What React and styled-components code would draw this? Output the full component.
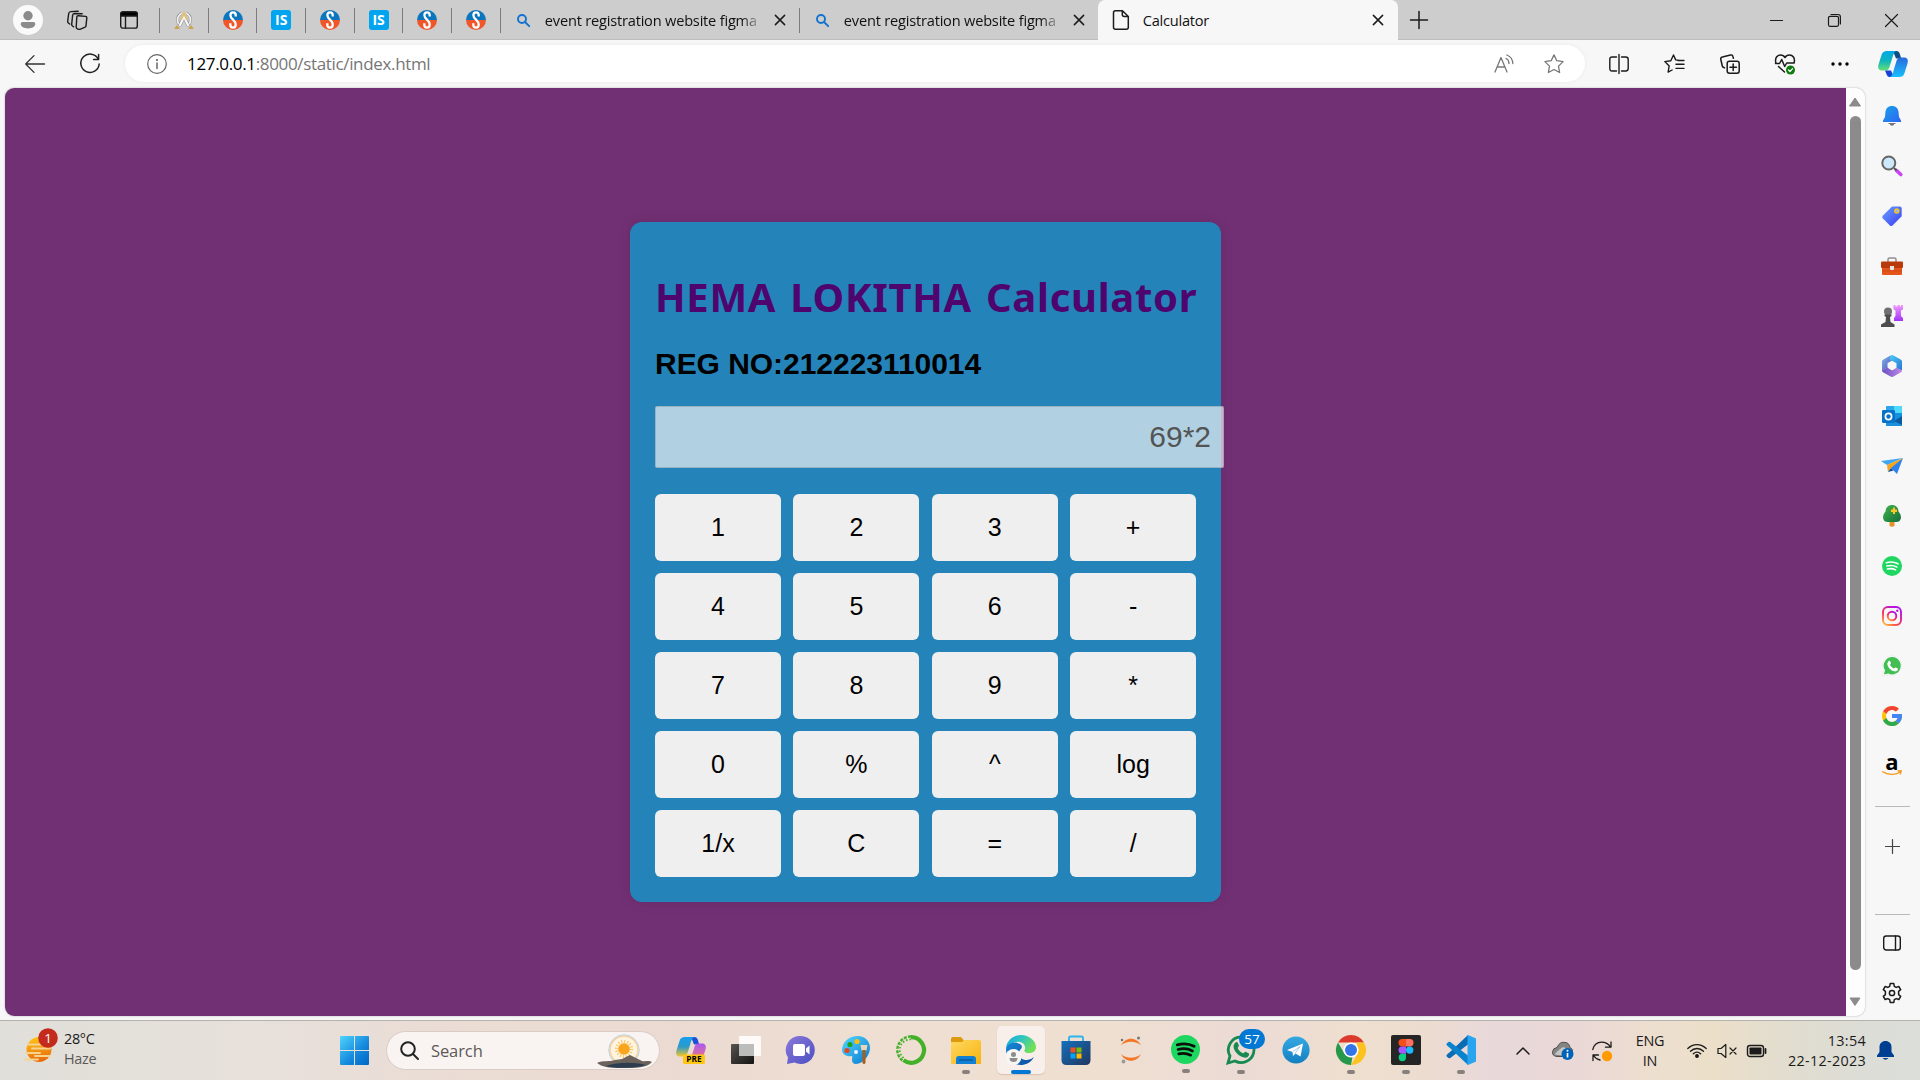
import React from "react";
import styled, { createGlobalStyle } from "styled-components";

const Global = createGlobalStyle`
  html, body { margin: 0; padding: 0; }
  body { width: 1920px; height: 1080px; overflow: hidden; background: #f7f7f7; }
  * { box-sizing: border-box; }
  svg { display: block; flex: none; overflow: visible; }
`;

const UI = `"Open Sans", "Noto Sans", sans-serif`;
const ARIAL = `"Liberation Sans", Arial, sans-serif`;

const Screen = styled.div`
  width: 1920px;
  height: 1080px;
  display: flex;
  flex-direction: column;
  font-family: ${UI};
  color: #1b1b1b;
`;

/* ---------- tab strip ---------- */
const TabStrip = styled.div`
  height: 40px;
  flex: none;
  display: flex;
  align-items: center;
  background: #cdcdcd;
  box-shadow: inset 0 -1px 0 #bdbdbd;
`;
const Slot = styled.div`
  width: ${(p) => p.$w}px;
  height: ${(p) => (p.$h ? p.$h + "px" : "100%")};
  flex: none;
  display: flex;
  align-items: center;
  justify-content: center;
`;
const Divider = styled.div`
  width: 1px;
  height: 25px;
  flex: none;
  background: #7c7c7c;
`;
const Tab = styled.div`
  width: ${(p) => p.$w}px;
  height: 40px;
  flex: none;
  display: flex;
  align-items: center;
  padding: 0 ${(p) => p.$pr}px 0 ${(p) => p.$pl}px;
  background: ${(p) => (p.$active ? "#f7f7f7" : "transparent")};
  border-radius: 7px 7px 0 0;
`;
const TabTitle = styled.div`
  flex: none;
  width: ${(p) => p.$w}px;
  margin-left: ${(p) => p.$ml}px;
  margin-right: auto;
  padding-bottom: 1px;
  overflow: hidden;
  white-space: nowrap;
  font-size: 14.6px;
  line-height: 24px;
  letter-spacing: ${(p) => p.$ls}px;
  color: #111;
  ${(p) => p.$fade && "-webkit-mask-image: linear-gradient(90deg, #000 92%, transparent 102%);"}
`;
const Favicon = styled.div`
  width: 20px;
  height: 20px;
  border-radius: 3px;
  background: #00a4ef;
  color: #fff;
  font: 700 14px/20px ${UI};
  text-align: center;
`;
const Spacer = styled.div`
  flex: 1;
`;

/* ---------- toolbar ---------- */
const Toolbar = styled.div`
  height: 48px;
  flex: none;
  display: flex;
  align-items: center;
  background: #f7f7f7;
  padding-bottom: 1px;
`;
const AddressBar = styled.div`
  width: 1460px;
  height: 37px;
  flex: none;
  display: flex;
  align-items: center;
  border-radius: 19px;
  background: #fff;
  box-shadow: 0 0 4px rgba(0, 0, 0, 0.06);
`;
const Url = styled.div`
  flex: 1;
  font-size: 17px;
  line-height: 24px;
  letter-spacing: -0.34px;
  color: #767676;
  white-space: nowrap;
  span { color: #000; }
`;

/* ---------- page ---------- */
const Middle = styled.div`
  height: 932px;
  flex: none;
  display: flex;
  background: #f7f7f7;
  padding: 0 0 4px 5px;
`;
const Viewport = styled.div`
  width: 1860px;
  height: 928px;
  flex: none;
  display: flex;
  border-radius: 9px;
  overflow: hidden;
  background: #fdfdfd;
  box-shadow: 0 0 2px rgba(0, 0, 0, 0.3);
`;
const Page = styled.main`
  width: 1841px;
  padding-top: 134px;
  background: #723074;
  font-family: ${ARIAL};
`;
const Scrollbar = styled.div`
  width: 19px;
  display: flex;
  flex-direction: column;
  align-items: center;
  padding: 9px 1px 0 0;
`;
const Thumb = styled.div`
  width: 11px;
  height: 854px;
  flex: none;
  margin: 9px 0 27px;
  border-radius: 6px;
  background: #8b8b8b;
`;
const Card = styled.section`
  width: 591px;
  height: 680px;
  margin-left: 625px;
  padding: 51px 25px 25px;
  border-radius: 12px;
  background: #2483b9;
  box-shadow: 0 0 13px rgba(0, 0, 0, 0.12);
`;
const Title = styled.h1`
  margin: 0;
  height: 48px;
  font: 700 40px/48px "Noto Sans", sans-serif;
  letter-spacing: 0.7px;
  word-spacing: 3px;
  white-space: nowrap;
  color: #4e056e;
`;
const RegNo = styled.h2`
  margin: 25px 0 0;
  height: 35px;
  font: 700 30px/35px ${ARIAL};
  letter-spacing: -0.04px;
  white-space: nowrap;
  color: #000;
`;
const Display = styled.div`
  width: 569px;
  height: 62px;
  margin: 25px 0 26px;
  padding-right: 12px;
  border: 1px solid rgba(110, 120, 125, 0.35);
  border-radius: 2px;
  background: rgba(248, 248, 248, 0.67);
  font: 30px/60px ${ARIAL};
  text-align: right;
  color: #545454;
`;
const Keys = styled.div`
  display: grid;
  grid-template-columns: repeat(4, 126px);
  grid-auto-rows: 67px;
  gap: 12px 12.4px;
`;
const Key = styled.button`
  border: 0;
  padding: 0;
  border-radius: 6px;
  background: #efefef;
  font: 25px/67px ${ARIAL};
  color: #000;
`;

/* ---------- sidebar ---------- */
const Sidebar = styled.aside`
  width: 54px;
  display: flex;
  flex-direction: column;
  align-items: center;
  padding-top: 3px;
`;
const Rule = styled.div`
  width: 35px;
  height: 1px;
  flex: none;
  background: #b9b9b9;
`;

/* ---------- taskbar ---------- */
const Taskbar = styled.footer`
  height: 60px;
  flex: none;
  display: flex;
  align-items: center;
  border-top: 1px solid #b5b2ae;
  background: linear-gradient(90deg, #e0dfd9 0, #e7e0db 250px, #ebdcd4 480px, #ebdad1 680px, #efdfd2 900px,
    #efdfd1 1110px, #ecdbd5 1240px, #eedfcf 1360px, #ecdcd0 1430px, #e9d8da 1490px, #ead8d6 1580px,
    #eddfce 1660px, #ecdfc9 1710px, #e2ddce 1780px, #dcddd6 1860px, #dcdeda 1920px);
`;
const Weather = styled.div`
  width: 327px;
  height: 100%;
  display: flex;
  padding: 8px 0 0 25px;
`;
const TwoLines = styled.div`
  width: ${(p) => p.$w}px;
  margin-left: ${(p) => p.$ml || 0}px;
  flex: none;
  text-align: ${(p) => p.$align || "left"};
  font-size: 14.4px;
  line-height: 20px;
  letter-spacing: ${(p) => p.$ls ?? -0.3}px;
  white-space: nowrap;
  span { color: #5b5957; }
`;
const SearchBox = styled.div`
  width: 274px;
  height: 39px;
  margin-left: 4px;
  flex: none;
  display: flex;
  align-items: center;
  padding: 0 7px 0 13px;
  border-radius: 20px;
  border: 1px solid #d9cbc5;
  background: #f9f4f2;
  font-size: 16.5px;
  letter-spacing: -0.1px;
  color: #5d5a58;
  svg + span { margin-left: 12px; flex: 1; }
`;
const AppSlot = styled.div`
  width: 55px;
  height: 59px;
  flex: none;
  display: flex;
  flex-direction: column;
  align-items: center;
  padding-top: 14px;
`;
const Tile = styled.div`
  width: 48px;
  height: 48px;
  margin: -9px 0 0;
  display: flex;
  flex-direction: column;
  align-items: center;
  padding-top: 9px;
  border-radius: 5px;
  background: ${(p) => (p.$active ? "#f8efea" : "transparent")};
  box-shadow: ${(p) => (p.$active ? "0 1px 1px rgba(120,90,70,.2)" : "none")};
`;
const RunMark = styled.div`
  width: ${(p) => (p.$active ? 20 : 8)}px;
  height: 4px;
  margin-top: 5px;
  border-radius: 2px;
  background: ${(p) => (p.$active ? "#0078d4" : "#88807c")};
`;

/* ---------- drawings ---------- */
const Ico = ({ s = 20, vb = "0 0 20 20", c = "#1b1b1b", w = 1.3, children }) => (
  <svg width={s} height={s} viewBox={vb} fill="none" stroke={c} strokeWidth={w} strokeLinecap="round" strokeLinejoin="round">
    {children}
  </svg>
);
const Art = ({ w = 20, h = w, vb, children }) => (
  <svg width={w} height={h} viewBox={vb || `0 0 ${w} ${h}`}>{children}</svg>
);
const Grad = ({ id, a, b, m, x2 = 1, y2 = 1 }) => (
  <linearGradient id={id} x1="0" y1="0" x2={x2} y2={y2}>
    <stop offset="0" stopColor={a} />
    {m && <stop offset=".5" stopColor={m} />}
    <stop offset="1" stopColor={b} />
  </linearGradient>
);

const Close = () => <Ico s={10} vb="0 0 10 10" w={1.5}><path d="M.4.4 9.6 9.6M9.6.4.4 9.6" /></Ico>;
const Lens = () => (
  <Ico s={13} vb="0 0 13 13" c="#1273cf" w={1.9}><circle cx="5" cy="5" r="4" /><path d="m8 8 4.2 4.2" /></Ico>
);
const SFav = () => (
  <Art w={20}>
    <path d="M0 10a10 10 0 0 1 20 0z" fill="#0b76bd" />
    <path d="M0 10a10 10 0 0 0 20 0z" fill="#f0562a" />
    <path d="M12.700 6.500V5C12.700 3.200 11.700 2.300 10.100 2.300S7.400 3.300 7.400 5.200c0 4 5.300 5 5.300 9.300 0 2-1.100 3.200-2.700 3.200S7.300 16.500 7.300 14.800V13.300" fill="none" stroke="#fff" strokeWidth="2.300" />
  </Art>
);
const AFav = () => (
  <Art w={20}>
    <g fill="none">
      <path d="M8 3C3.500 5 2.500 10 4.500 13.500L7 16M12 3c4.500 2 5.500 7 3.500 10.500L13 16" stroke="#8f8f93" strokeWidth="3" />
      <path d="M8 3C3.500 5 2.500 10 4.500 13.500L7 16M12 3c4.500 2 5.500 7 3.500 10.500L13 16" stroke="#f2f2f2" strokeWidth="1.800" />
      <path d="m5.500 16 4.500-9 4.500 9" stroke="#8f8f93" strokeWidth="3.200" />
      <path d="m5.500 16 4.500-9 4.500 9" stroke="#f8f8f8" strokeWidth="2.100" />
      <path d="M7 9.500 10 3l3 6.500" stroke="#e2c27a" strokeWidth="2.200" />
    </g>
    <path d="m0 19 3-4 3 4zM14 19l3-4 3 4z" fill="#c9a552" />
  </Art>
);
const IsFav = () => <Favicon>IS</Favicon>;

const Avatar = () => (
  <Art w={30}>
    <circle cx="15" cy="15" r="15" fill="#fafafa" />
    <circle cx="15" cy="10.800" r="4.700" fill="#8b8b8b" />
    <path d="M9.500 17h11q1.800 0 1.800 1.800c0 3-3.300 4.600-7.300 4.600s-7.300-1.600-7.300-4.600Q7.700 17 9.500 17z" fill="#8b8b8b" />
  </Art>
);
const Workspaces = () => (
  <Ico s={22} vb="0 0 22 22" w={1.400}>
    <path d="m12.300 6.700 7.200.7q1.500.2 1.300 1.700l-.8 7.800q-.1.900-.9 1.300l-4.600 2q-.8.300-1.600.1l-1.500-.5q-1.300-.4-1.200-1.800l.6-9.800q.1-1.600 1.500-1.500z" />
    <path d="M7.600 17.800 6.500 17q-1-.6-.8-1.800l.9-8.800q.2-1.900 2-1.900l7.600.2M3.700 15l-1.300-1q-.9-.7-.7-1.900l1-7.600q.3-1.800 2.100-1.900l7.400-.3" />
  </Ico>
);
const TabActions = () => (
  <Ico s={18} vb="0 0 18 18" w={1.400}>
    <rect x=".7" y=".9" width="16.600" height="16.200" rx="2.200" />
    <path d="M.7 5V2.900q0-2 2.200-2h12.200q2.200 0 2.200 2V5z" fill="#000" /><path d="M5.500 5v12" />
  </Ico>
);
const BackIcon = () => <Ico c="#333" w={1.300}><path d="M19.500 10H.7M9 1.600.7 10 9 18.400" /></Ico>;
const ReloadIcon = () => <Ico w={1.500} c="#222"><path d="M18.300 5.200A9.200 9.200 0 1 0 19.200 10M18.600.5v5h-5" /></Ico>;
const InfoIcon = () => (
  <Ico c="#666" w={1.200}><circle cx="10" cy="10" r="9.300" /><path d="M10 9v5.500" strokeWidth="1.500" /><circle cx="10" cy="6" r=".5" fill="#666" /></Ico>
);
const ReadAloud = () => (
  <Ico c="#777" w={1.300}><path d="M1 18 7 3.500 13 18M3.200 13h7.700M12 4.500c2 .8 3 2.600 3 5M12.800 1c3.600 1.400 5.900 4.700 6 8.600" /></Ico>
);
const STAR = "m10 .9 2.800 5.800 6.300.9-4.600 4.500 1.100 6.400L10 15.500l-5.600 3 1.100-6.400L.9 7.600l6.300-.9z";
const StarIcon = () => <Ico c="#777" w={1.300}><path d={STAR} /></Ico>;
const SplitIcon = () => <Ico w={1.400}><path d="M7.500 17H3.200Q.8 17 .8 14.600V5.400Q.8 3 3.200 3h4.300M12.500 3h4.300q2.400 0 2.400 2.400v9.200q0 2.400-2.400 2.400h-4.300M10 .5v19" /></Ico>;
const FavsIcon = () => <Ico w={1.400}><path d="M14.300 6.200 11.700 5.900 9.500 1 6.800 6.700l-6 .9 4.400 4.300-1.100 6.200 4-2.100M14 6.500h6M12 10.200h8M12 14.400h8" /></Ico>;
const CollectIcon = () => (
  <Ico w={1.500}>
    <rect x="7.200" y="7.200" width="12" height="12" rx="2.200" /><path d="M13.200 10v6.400M10 13.200h6.400M4.500 13.800C3 13.500 2.500 13 2.300 12L.8 5.500C.5 4.200 1 3.400 2.300 3.100L10.500 1c1.300-.3 2.100.2 2.400 1.500l.5 1.800" />
  </Ico>
);
const HealthIcon = () => (
  <Ico w={1.500}>
    <path d="M.8 8.500C-.3 3.800 2.400 1 5.500 1 8 1 9.300 2.300 10 3.500 10.700 2.300 12 1 14.500 1c3.100 0 5.800 2.800 4.700 7.500M.5 9.500h4l2.200-4 3 7 2-3.500h7.500M3.500 12.500l6 5.500" />
    <circle cx="15.500" cy="16" r="4.500" fill="#0f7b0f" stroke="none" /><path d="m13.500 16 1.500 1.500 2.600-2.800" stroke="#fff" strokeWidth="1.200" />
  </Ico>
);
const Dots = () => <Art w={18} h={4}><circle cx="2" cy="2" r="1.700" /><circle cx="9" cy="2" r="1.700" /><circle cx="16" cy="2" r="1.700" /></Art>;
const Copilot = ({ w = 30, pre }) => {
  const k = pre ? "p" : "c";
  return (
    <Art w={w} h={w} vb="0 0 30 30">
      <defs>
        <linearGradient id={k + "1"} x1="0" y1="0" x2="0" y2="1"><stop offset="0" stopColor={pre ? "#159ff0" : "#00a8e8"} /><stop offset=".5" stopColor={pre ? "#2c9ac7" : "#0fb5bd"} /><stop offset="1" stopColor={pre ? "#f7c62b" : "#65df76"} /></linearGradient>
        <linearGradient id={k + "2"} x1="0" y1="0" x2="0" y2="1"><stop offset="0" stopColor={pre ? "#a958f5" : "#2a69da"} /><stop offset="1" stopColor={pre ? "#ff8060" : "#16c0ff"} /></linearGradient>
      </defs>
      <path d="M15 2h3.500c3 0 3.500 3 4.500 7l-5 .5z" fill={pre ? "#1d50d8" : "#0d4f84"} />
      <path d="M9 2h9c-2 1-3 4-4 8l-2.500 8c-1 3-2 3.500-4.500 3.500H4c-3.500 0-4.500-2.500-3.500-6L3.500 6C4.500 3 6 2 9 2z" fill={`url(#${k}1)`} />
      <path d="M7 21.500h6l3 6.500h-4.500c-2.500 0-3-3.500-4.500-6.500z" fill={pre ? "#f2b62c" : "#1742d4"} />
      <path d="M21 28h-9c2-1 3-4 4-8l2.500-8c1-3 2-3.500 4.500-3.500h3c3.500 0 4.500 2.500 3.500 6L26.500 24c-1 3-2.500 4-5.500 4z" fill={`url(#${k}2)`} />
      {pre && <g><rect x="7" y="19.500" width="22" height="9.500" rx="1.500" fill="#ffc713" /><text x="18" y="27.300" fontSize="8.300" fontWeight="700" fontFamily="Open Sans" textAnchor="middle">PRE</text></g>}
    </Art>
  );
};

const spotifyWaves = (c, w) => (
  <g fill="none" stroke={c} strokeWidth={w} strokeLinecap="round">
    <path d="M4.300 6.800c4-1.200 8.300-.8 11.700 1" /><path d="M4.900 10c3.300-.9 7-.6 9.900 1" /><path d="M5.400 13c2.700-.7 5.700-.4 8.200.9" />
  </g>
);
const Spotify = ({ w = 20, dark }) => (
  <Art w={w} vb="0 0 20 20"><circle cx="10" cy="10" r="10" fill="#1ed760" />{spotifyWaves(dark ? "#0a0f0a" : "#fff", dark ? 1.900 : 1.600)}</Art>
);
const PHONE = "M6.200 5.300c.6-.6 1.200-.5 1.500.1l.8 1.800c.2.500-.8 1.200-.8 1.600.6 1.700 2 2.900 3.600 3.600.5.100 1-1.200 1.600-1l1.900.9c.5.300.5.700.3 1.300-.5 1.300-1.800 1.800-3 1.600C8.300 14.500 5.400 11.300 5 8.300c-.1-1.200.3-2.200 1.200-3z";

const SideBell = () => <Art w={18} h={20}><defs><Grad id="sb" a="#18a0e8" b="#2f66f5" /></defs><path d="M7 18h4v1q-2 1.500-4 0zM5.500 17h7v1h-7z" fill="#777" /><path d="M9 0C5 0 2.600 2.700 2.400 6.500L2 11l-2 3.500V16h18v-1.500L16 11l-.4-4.500C15.400 2.700 13 0 9 0z" fill="url(#sb)" /></Art>;
const SideSearch = () => <Art w={20}><path d="m14.500 14.500 4.300 4" stroke="#c844f5" strokeWidth="3.600" strokeLinecap="round" /><path d="m12 12 2.500 2.500" stroke="#555" strokeWidth="2" /><circle cx="6.800" cy="7" r="6.500" fill="#cde8fa" stroke="#666" strokeWidth="2" /></Art>;
const SideTag = () => <Art w={20}><defs><Grad id="tg" a="#6aa3ff" b="#3b3af2" /></defs><path d="M10 .5h8q1.700 0 1.700 1.700v8L10.500 19.500q-1.300 1-2.600 0L.7 12.200q-1-1.300 0-2.500z" fill="url(#tg)" /><circle cx="14.800" cy="5" r="2" fill="#8fb4ff" stroke="#f2c811" strokeWidth="1.500" /></Art>;
const SideTools = () => <Art w={22} h={18}><path d="M7 5V2.500Q7 1 8.500 1h5Q15 1 15 2.500V5" fill="none" stroke="#8e8e8e" strokeWidth="1.500" /><rect x="1" y="9" width="20" height="9" rx="1" fill="#e4551c" /><rect y="4.500" width="22" height="6.500" rx="1" fill="#b83a0b" /><path d="M1 13h20v1.500H1z" fill="#c5440f" opacity=".5" /><path d="M9 9h4v3.500q-2 1.500-4 0z" fill="#e4e4e4" /></Art>;
const SideGames = () => <Art w={22}><defs><Grad id="gm" a="#ef9bff" b="#a232f5" x2={0} /></defs><path d="M12.500 0h2v1.500h2V0h2.500v1.500h1V0h2v4.500l-2 1V11l2 2v3h-9v-3l1.500-2V5.500l-2-1z" fill="url(#gm)" /><circle cx="7" cy="6.500" r="4" fill="#707070" /><path d="M3.500 9.500h7V11l-1.500 1 .5 5 4 2.500V22H0v-2.500L4.500 17l.5-5-1.500-1z" fill="#4d4d4d" /></Art>;
const Side365 = () => (
  <Art w={20} h={22}>
    <defs><Grad id="m1" a="#7bb9ee" b="#5950b8" /><Grad id="m2" a="#49cdf3" b="#2c73d9" /><Grad id="m3" a="#674fc0" b="#c18be8" x2={1} y2={0} /></defs>
    <path d="M8.500.5 1 4.800Q0 5.400 0 6.600v8.600l5.500-2.400V8.200L10 5.400z" fill="url(#m1)" />
    <path d="M8.500.5q1.500-.9 3 0L19 4.800q1 .6 1 1.800v9l-5.500-2.400V8.200L7.500 4.500z" fill="url(#m2)" />
    <path d="m0 15.200 5.500-2.700L10 15.300l4.500-2.500L20 15.600q0 1-1 1.600l-7.500 4.300q-1.500.9-3 0L1 17.200q-1-.6-1-2z" fill="url(#m3)" />
    <path d="m10 6.800 3.800 2.200v4L10 15.200 6.200 13V9z" fill="#f7f7f7" />
  </Art>
);
const SideOutlook = () => <Art w={20}><path d="M4 1q0-1 1-1h14q1 0 1 1v18q0 1-1 1H5q-1 0-1-1z" fill="#28a8ea" /><path d="M12 0h7q1 0 1 1v6h-8z" fill="#50d9ff" /><path d="M12 7h8v6h-8z" fill="#1490df" /><path d="M4 11h16v8q0 1-1 1H5q-1 0-1-1z" fill="#1b8fdc" /><path d="m12 15 8-5v9z" fill="#0c5a9e" /><rect y="4" width="13" height="13" rx="1.300" fill="#0573c8" /><circle cx="6.500" cy="10.500" r="3.100" fill="none" stroke="#fff" strokeWidth="1.700" /></Art>;
const SidePlane = () => <Art w={22} h={16}><path d="M22 0 0 3l6 4z" fill="#3da7f3" /><path d="M22 0 16 16 9 9z" fill="#2e82ee" /><path d="M22 0 6 7l1 7 3-4z" fill="#f6a51b" /><path d="m7 14 3-4 2.500 2.500z" fill="#0f4da8" /></Art>;
const SideTree = () => <Art w={18} h={22}><defs><Grad id="tr" a="#3fb64a" b="#156c3c" /></defs><path d="M6.500 14h5v7q-2.500 1.500-5 0z" fill="#e8912a" /><path d="M9 0c4 0 6.500 3 6.500 6.500Q18 9 18 12q0 5-5 5H5q-5 0-5-5 0-3 2.500-5.500C2.500 3 5 0 9 0z" fill="url(#tr)" /><path d="M10 2.500h2v2h2v2.500h-2v2h-2v-2H8V4.500h2z" fill="#ffc52b" /></Art>;
const SideInsta = () => <Art w={20}><defs><linearGradient id="ig" x1="0" y1="1" x2=".7" y2="0"><stop offset="0" stopColor="#ffc93c" /><stop offset=".45" stopColor="#ff2f55" /><stop offset="1" stopColor="#b013e8" /></linearGradient></defs><g fill="none" stroke="url(#ig)" strokeWidth="1.900"><rect x="1" y="1" width="18" height="18" rx="5" /><circle cx="10" cy="10" r="4.300" /></g><circle cx="15.300" cy="4.700" r="1.200" fill="#c01be0" /></Art>;
const SideWhats = () => <Art w={20}><path d="M10.500-.3A9.900 9.900 0 0 0 1.700 14.500L.2 20.300l5.800-1.500A9.900 9.900 0 1 0 10.500-.3z" fill="#fff" stroke="#e0e0e0" strokeWidth=".5" /><path d="M10.500 1A8.700 8.700 0 0 0 3 14.300L1.900 18.500l4.300-1A8.700 8.700 0 1 0 10.500 1z" fill="#42be53" /><path d={PHONE} fill="#fff" transform="translate(.2 -.3) scale(1.030)" /></Art>;
const SideGoogle = () => <Art w={20} vb="4 4 40 40"><path fill="#FFC107" d="M43.600 20H24v8h11.300C33.700 32.700 29.200 36 24 36c-6.600 0-12-5.400-12-12s5.400-12 12-12c3 0 5.800 1.200 7.900 3l5.700-5.700C34 6.100 29.300 4 24 4 13 4 4 13 4 24s9 20 20 20 20-9 20-20c0-1.300-.1-2.700-.4-4z" /><path fill="#F14336" d="m6.300 14.700 6.600 4.800C14.700 15.100 19 12 24 12c3 0 5.800 1.200 7.900 3l5.700-5.700C34 6.100 29.300 4 24 4 16.300 4 9.700 8.300 6.300 14.700z" /><path fill="#2da94f" d="M24 44c5.200 0 9.900-2 13.400-5.200l-6.200-5.200C29.200 35.100 26.700 36 24 36c-5.200 0-9.600-3.300-11.300-8l-6.500 5C9.500 39.600 16.200 44 24 44z" /><path fill="#4285F4" d="M43.600 20H24v8h11.300c-.8 2.200-2.200 4.200-4.100 5.600l6.200 5.200C37 39.200 44 34 44 24c0-1.300-.1-2.700-.4-4z" /></Art>;
const SideAmazon = () => <Art w={20}><text x="9.800" y="14.200" fontFamily="Open Sans" fontWeight="700" fontSize="22" textAnchor="middle" fill="#000">a</text><path d="M.5 15.800c5.500 3.400 12.500 3.400 17.500.4M16 15l3.200-.2-.7 3" fill="none" stroke="#f7971d" strokeWidth="1.300" strokeLinecap="round" /></Art>;
const PanelIcon = () => <Ico s={18} vb="0 0 18 18" w={1.400}><rect x=".7" y="2" width="16.600" height="14" rx="2.500" /><path d="M12.500 2v14" /></Ico>;
const GearIcon = () => (
  <Ico s={20} w={1.500}>
    <circle cx="10" cy="10" r="2.600" />
    <path d="M8.200.6h3.600l.5 2.700 1.900 1.100 2.600-.9 1.900 3.100-2.100 1.800v3.200l2.100 1.800-1.900 3.100-2.600-.9-1.900 1.100-.5 2.700H8.200l-.5-2.700-1.900-1.100-2.600.9-1.900-3.100 2.100-1.800V8.400L1.300 6.600l1.900-3.100 2.600.9 1.900-1.100z" />
  </Ico>
);

const sideIcons = [SideBell, SideSearch, SideTag, SideTools, SideGames, Side365, SideOutlook, SidePlane, SideTree, Spotify, SideInsta, SideWhats, SideGoogle, SideAmazon];

/* taskbar app icons, 30px box */
const TaskView = () => <Art w={30}><defs><Grad id="tv" a="#55534f" b="#141414" /></defs><rect y="9" width="23" height="20" rx="1" fill="url(#tv)" /><rect x="8" y="1" width="22" height="20" rx="1" fill="#fff" opacity=".86" /><rect x="8" y="9" width="15" height="12" fill="#bcbcba" /></Art>;
const Chat = () => <Art w={30}><defs><Grad id="ch" a="#8a78d8" b="#4c50c4" /></defs><path d="M15 1a14 14 0 1 1-6.500 26.500L1 29l1-6.500A14 14 0 0 1 15 1z" fill="url(#ch)" /><rect x="7" y="9" width="12" height="12" rx="2" fill="#fff" /><path d="m20 13.500 3.500-3v9l-3.500-3z" fill="#fff" /></Art>;
const Paint = () => <Art w={30}><defs><Grad id="pa" a="#53d9ff" b="#0878cf" /></defs><path d="M17 1c7 0 12 5 12 12S22 29 15 29c-3 0-4-2-4-4 0-3 1-4-1-4-3 1-9-1-9-6C1 7 8 1 17 1z" fill="url(#pa)" /><circle cx="9" cy="9.500" r="2.600" fill="#17a321" /><circle cx="16" cy="6.500" r="2.600" fill="#fbbd13" /><circle cx="6" cy="15.500" r="2.600" fill="#dd4a22" /><circle cx="15" cy="17" r="2" fill="#e9f5ff" /><path d="M19.500 10h7l-1 5.500h-5z" fill="#e8d6b4" /><path d="M21.500 15h3v13q-1.500 2-3 0z" fill="#a85d18" /></Art>;
const Anaconda = () => <Art w={30}><g fill="none" stroke="#43b02a"><path d="M15 2.200a12.800 12.800 0 1 1-7.500 23" strokeWidth="4.200" /><path d="M15 1.500A13.500 13.500 0 0 0 7 26" strokeWidth="2.400" strokeDasharray="3 1.300" /><path d="M15 4.500A10.500 10.500 0 0 0 7.500 23" strokeWidth="1.700" strokeDasharray="1.600 1.900" /></g></Art>;
const Explorer = () => <Art w={30}><defs><Grad id="ex" a="#ffd862" b="#f7b30d" /></defs><path d="M0 4q0-2 2-2h8l3 3.500V9H0z" fill="#dc9b0d" /><path d="M0 7h11l2-2h15q2 0 2 2v21q0 1-1 1H1q-1 0-1-1z" fill="url(#ex)" /><path d="M5 29v-5q0-3 3-3h14q3 0 3 3v5z" fill="#1180d3" /><path d="M8 25h14" stroke="#08569c" strokeWidth="1.300" /></Art>;
const Edge = () => (
  <Art w={30}>
    <defs><Grad id="e1" a="#19a5df" b="#72df5a" m="#2fc6c0" y2={0.5} /><Grad id="e2" a="#1689d8" b="#0a4c9d" /></defs>
    <path d="M0 14C0 6 7 0 15 0s15 6 15 12c0 4-3 6-7 6-3 0-6-1-4-4 1-6-6-9-12-6C3 10 0 12 0 14z" fill="url(#e1)" />
    <path d="M0 14C1 8 9 6 14 9c3 2 2 4 0 6-3 4 0 10 7 10q4 0 7-3c-3 6-9 8-13 8C6 30 0 23 0 14z" fill="url(#e2)" />
    <circle cx="7.500" cy="22" r="8" fill="#f7f6f5" /><circle cx="7.500" cy="19.500" r="2.500" fill="#8c8c8c" /><path d="M3.500 23h8q0 4-4 4t-4-4z" fill="#8c8c8c" />
  </Art>
);
const Store = () => <Art w={30}><defs><Grad id="st" a="#1570bd" b="#21375f" /></defs><path d="M8 7V3q0-1.500 1.500-1.500h11Q22 1.500 22 3v4" fill="none" stroke="#2cb4ee" strokeWidth="1.900" /><path d="M.5 6h29v19q0 5-5 5h-19q-5 0-5-5z" fill="url(#st)" /><path d="M9.500 12.500h5v5h-5z" fill="#f25022" /><path d="M15.500 12.500h5v5h-5z" fill="#7fba00" /><path d="M9.500 18.500h5v5h-5z" fill="#00a4ef" /><path d="M15.500 18.500h5v5h-5z" fill="#ffb900" /></Art>;
const Jupyter = () => <Art w={30}><path d="M5 10.500c4-9 16-9 20 0-5-5-15-5-20 0zM5 19c4 9 16 9 20 0-5 5-15 5-20 0z" fill="#f37726" /><circle cx="6" cy="5" r="1.200" fill="#6d6e71" /><circle cx="22.500" cy="3" r="1.500" fill="#777" /><circle cx="7.500" cy="26.500" r="1.900" fill="#9b9b9b" /></Art>;
const Whats = () => (
  <Art w={30}>
    <path d="M15.500 2A12.800 12.800 0 0 0 4 21L2 28l7-2A12.800 12.800 0 1 0 15.500 2z" fill="none" stroke="#178a51" strokeWidth="2.800" />
    <path d={PHONE} fill="#178a51" transform="translate(0 -.5) scale(1.520)" />
    <rect x="13" y="-6" width="26" height="20" rx="10" fill="#0078d4" /><text x="26" y="9" fontFamily="Open Sans" fontSize="13.500" fill="#fff" textAnchor="middle">57</text>
  </Art>
);
const Telegram = () => <Art w={30}><defs><Grad id="te" a="#35a9e3" b="#137fc1" x2={0} /></defs><circle cx="15" cy="15" r="13.600" fill="url(#te)" /><path d="m6 15 16-6.500-2.500 13-5-3-2.500 2.500-.5-4z" fill="#fff" /><path d="m12 16.500 7-5-5 7" stroke="#9cc9e8" fill="none" strokeWidth=".9" /></Art>;
const Chrome = () => <Art w={30}><path d="M2 7.500a15 15 0 0 1 26 0H15z" fill="#db3a2c" /><path d="M28 7.500A15 15 0 0 1 15 30l6.500-11.200-.5-11.300z" fill="#fcc31e" /><path d="M15 30A15 15 0 0 1 2 7.500l6.500 11.300 8 3.200z" fill="#26984a" /><circle cx="15" cy="15" r="7.600" fill="#fff" /><circle cx="15" cy="15" r="6" fill="#3374e8" /></Art>;
const Figma = () => <Art w={30}><rect width="30" height="30" rx="2" fill="#252525" /><path d="M15 4h-3.800a3.700 3.700 0 0 0 0 7.400H15z" fill="#f24e1e" /><path d="M15 4h3.800a3.700 3.700 0 0 1 0 7.400H15z" fill="#ff7262" /><path d="M15 11.400h-3.800a3.700 3.700 0 0 0 0 7.400H15z" fill="#a259ff" /><circle cx="18.700" cy="15.100" r="3.700" fill="#1abcfe" /><path d="M15 18.800h-3.800a3.700 3.700 0 1 0 3.800 3.700z" fill="#0acf83" /></Art>;
const VSCode = () => <Art w={30}><path d="M22 0 4.500 16.500 1 19.500.3 21l2 2 1.700.2L22.500 9z" fill="#0a6cb4" /><path d="M22 30 4.500 13.500 1 10.500.3 9l2-2L4 6.800 22.500 21z" fill="#0a83cf" /><path d="M22 0 30 3.500v23L22 30q-1-.5-.5-2V2q-.5-1.500.5-2z" fill="#28a5ee" /></Art>;
const StartIcon = () => <Art w={29}><defs><linearGradient id="wn" gradientUnits="userSpaceOnUse" x1="0" y1="0" x2="29" y2="29"><stop offset="0" stopColor="#4fd4fc" /><stop offset=".6" stopColor="#1287dc" /><stop offset="1" stopColor="#0067c6" /></linearGradient></defs><path d="M1 0h13v14H0V1q0-1 1-1zM15 0h13q1 0 1 1v13H15zM0 15h14v14H1q-1 0-1-1zM15 15h14v13q0 1-1 1H15z" fill="url(#wn)" /></Art>;
const HazeIcon = () => (
  <Art w={36} h={36}>
    <defs><Grad id="hz" a="#ffcb16" b="#e96c0b" x2={0.2} /></defs>
    <circle cx="14" cy="20.500" r="12.500" fill="url(#hz)" />
    <path d="M3 15.500h14M7 19.500h18M1 24h14M10 27h15M0 30.500h13" stroke="#f5d491" strokeWidth="1.900" strokeLinecap="round" />
    <circle cx="23" cy="9" r="9.800" fill="#c42b1c" /><text x="23" y="14" fontFamily="Open Sans" fontSize="13.500" fill="#fff" textAnchor="middle">1</text>
  </Art>
);
const SunIcon = () => (
  <Art w={55} h={34}>
    <circle cx="27" cy="16" r="14" fill="#fff4e0" stroke="#f5cf9c" strokeWidth="1.500" /><circle cx="27" cy="16" r="15.300" fill="none" stroke="#bfd6e8" strokeWidth="1" />
    <circle cx="27" cy="15" r="7.500" fill="none" stroke="#f8c15c" strokeWidth="3.200" strokeDasharray="1 1.950" /><circle cx="27" cy="15" r="5.800" fill="#f9a51d" />
    <path d="M0 29c6-3 13-1 18-3l7-1 8-4 8 4 4 2c4 1 7-1 10 1-5 6-16 6-30 6S5 33 0 29z" fill="#6b625c" /><path d="M9 32c12-4 28-4 40-1-8 3-32 4-40 1z" fill="#2c3d50" />
  </Art>
);
const CloudIcon = () => <Art w={22} h={20}><path d="M5 15.500q-5-.5-4.500-4.800Q1 7 5 6.500 8 0 13 1.500q4 0 5 5 3 1 2.500 5L12 15.500z" fill="#858585" stroke="#444" strokeWidth=".9" /><path d="M2.500 13.500q5-6 9-7.500l7.500 4.500-8 4z" fill="#c6c6c6" /><circle cx="15.500" cy="13" r="6" fill="#0063b8" /><path d="M15.500 12v4.500" stroke="#fff" strokeWidth="1.700" /><circle cx="15.500" cy="9.800" r="1" fill="#fff" /></Art>;
const SyncIcon = () => <Ico s={20} w={1.300}><path d="M.8 8.500C2 4 5.500 1.200 9.500 1.200c4 0 7 1.800 9 4.800M19 1v5.200h-5.500M8 19c-3-.6-5-2.300-6.500-4.500M1 19.500V14h5.500" /><circle cx="15" cy="15" r="5.200" fill="#ff9a00" stroke="none" /></Ico>;
const WifiIcon = () => <Ico s={20} w={1.300}><path d="M.8 7.500C6 2.200 14 2.200 19.200 7.500M3.500 10.200c3.700-3.600 9.300-3.600 13 0M6.300 12.800c2.200-2 5.200-2 7.400 0" /><circle cx="10" cy="15" r="1.300" fill="#1b1b1b" /></Ico>;
const MuteIcon = () => <Ico s={20} w={1.200}><path d="M1 7.500h3L8.800 3.500v13L4 12.500H1zM13 7l6 6M19 7l-6 6" /></Ico>;
const BatteryIcon = () => <Ico s={20} w={1.400}><rect x=".5" y="4.500" width="16" height="11" rx="2.500" /><rect x="2.500" y="6.500" width="12" height="7" rx=".7" fill="#1b1b1b" stroke="none" /><path d="M18.500 8v4" strokeWidth="1.800" /></Ico>;
const BellIcon = () => <Art w={17} h={19}><path d="M8.500 0C5 0 2.500 2.500 2.500 6v5L0 14.500V16h17v-1.500L14.500 11V6c0-3.500-2.500-6-6-6zM5.500 17h6q-3 3.500-6 0z" fill="#003e92" /></Art>;

const apps = [
  { I: () => <Copilot pre /> }, { I: TaskView }, { I: Chat }, { I: Paint }, { I: Anaconda },
  { I: Explorer, run: true }, { I: Edge, run: true, active: true }, { I: Store }, { I: Jupyter },
  { I: () => <Spotify w={29} dark />, run: true }, { I: Whats, run: true }, { I: Telegram },
  { I: Chrome, run: true }, { I: Figma, run: true }, { I: VSCode, run: true },
];
const keys = ["1", "2", "3", "+", "4", "5", "6", "-", "7", "8", "9", "*", "0", "%", "^", "log", "1/x", "C", "=", "/"];
const pinned = [AFav, SFav, IsFav, SFav, IsFav, SFav, SFav];

export default function App() {
  return (
    <Screen>
      <Global />
      <TabStrip>
        <Slot $w={56}><Avatar /></Slot>
        <Slot $w={42}><Workspaces /></Slot>
        <Slot $w={61}><TabActions /></Slot>
        <Divider />
        {pinned.map((F, i) => (
          <React.Fragment key={i}>
            <Slot $w={47.7}><F /></Slot>
            <Divider />
          </React.Fragment>
        ))}
        <Tab $w={298} $pl={16} $pr={14}>
          <Lens /><TabTitle $w={214} $ml={15} $ls={-0.2} $fade>event registration website figma</TabTitle><Close />
        </Tab>
        <Divider />
        <Tab $w={298} $pl={16} $pr={14}>
          <Lens /><TabTitle $w={214} $ml={15} $ls={-0.2} $fade>event registration website figma</TabTitle><Close />
        </Tab>
        <Tab $w={300} $pl={13} $pr={15} $active>
          <Ico s={20} w={1.500}><path d="M4 .8h7.500L17.300 6.500v10.700q0 2-2 2H4.500q-2 0-2-2V2.800q0-2 2-2zM11.300 1v3.500q0 2 2 2h3.800" /></Ico>
          <TabTitle $w={120} $ml={12} $ls={-0.25}>Calculator</TabTitle><Close />
        </Tab>
        <Slot $w={42}><Ico s={18} vb="0 0 18 18" w={1.500}><path d="M9 .5v17M.5 9h17" /></Ico></Slot>
        <Spacer />
        <Slot $w={57}><Ico s={13} vb="0 0 13 13" w={1.200}><path d="M.5 6.500h12" /></Ico></Slot>
        <Slot $w={58}><Ico s={13} vb="0 0 13 13" w={1.200}><rect x=".5" y="2.300" width="10" height="10" rx="1.500" /><path d="M3 .5h7q2.400 0 2.400 2.400v7" /></Ico></Slot>
        <Slot $w={57}><Ico s={13} vb="0 0 13 13" w={1.200}><path d="m.5.500 12 12M12.500.500l-12 12" /></Ico></Slot>
      </TabStrip>

      <Toolbar>
        <Slot $w={70}><BackIcon /></Slot>
        <Slot $w={40}><ReloadIcon /></Slot>
        <Slot $w={15} />
        <AddressBar>
          <Slot $w={2} />
          <Slot $w={60}><InfoIcon /></Slot>
          <Url><span>127.0.0.1</span>:8000/static/index.html</Url>
          <Slot $w={50}><ReadAloud /></Slot>
          <Slot $w={50}><StarIcon /></Slot>
          <Slot $w={6} />
        </AddressBar>
        <Slot $w={6} />
        <Slot $w={55}><SplitIcon /></Slot>
        <Slot $w={56}><FavsIcon /></Slot>
        <Slot $w={55}><CollectIcon /></Slot>
        <Slot $w={55}><HealthIcon /></Slot>
        <Slot $w={55}><Dots /></Slot>
        <Slot $w={51}><Copilot /></Slot>
      </Toolbar>

      <Middle>
        <Viewport>
          <Page>
            <Card>
              <Title>HEMA LOKITHA Calculator</Title>
              <RegNo>REG NO:212223110014</RegNo>
              <Display>69*2</Display>
              <Keys>{keys.map((k) => <Key key={k}>{k}</Key>)}</Keys>
            </Card>
          </Page>
          <Scrollbar>
            <Art w={12} h={10}><path d="M6 1 11.500 9H.5z" fill="#8b8b8b" stroke="#8b8b8b" strokeLinejoin="round" /></Art>
            <Thumb />
            <Art w={12} h={10}><path d="M6 8.500 11 1H1z" fill="#8b8b8b" stroke="#8b8b8b" strokeLinejoin="round" /></Art>
          </Scrollbar>
        </Viewport>
        <Sidebar>
          {sideIcons.map((I, i) => <Slot key={i} $w={54} $h={50}><I /></Slot>)}
          <Slot $w={54} $h={15} />
          <Rule />
          <Slot $w={54} $h={78}><Ico s={15} vb="0 0 15 15" c="#444" w={1.200}><path d="M7.500.500v14M.500 7.500h14" /></Ico></Slot>
          <Slot $w={54} $h={29} />
          <Rule />
          <Slot $w={54} $h={55}><PanelIcon /></Slot>
          <Slot $w={54} $h={46}><GearIcon /></Slot>
        </Sidebar>
      </Middle>

      <Taskbar>
        <Weather>
          <HazeIcon />
          <TwoLines $w={80} $ml={3}>28°C<br /><span>Haze</span></TwoLines>
        </Weather>
        <Slot $w={55}><StartIcon /></Slot>
        <SearchBox>
          <Ico s={19} vb="0 0 19 19" w={2} c="#222"><circle cx="8" cy="8" r="6.800" /><path d="m13 13 5 5" /></Ico>
          <span>Search</span>
          <SunIcon />
        </SearchBox>
        <Slot $w={3} />
        {apps.map(({ I, run, active }, i) => (
          <AppSlot key={i}>
            <Tile $active={active}><I />{run && <RunMark $active={active} />}</Tile>
          </AppSlot>
        ))}
        <Slot $w={14} />
        <Slot $w={41}><Ico s={14} vb="0 0 14 14" w={1.500}><path d="m1 10 6-6 6 6" /></Ico></Slot>
        <Slot $w={39}><CloudIcon /></Slot>
        <Slot $w={40}><SyncIcon /></Slot>
        <TwoLines $w={56} $align="center">ENG<br />IN</TwoLines>
        <Slot $w={38}><WifiIcon /></Slot>
        <Slot $w={22}><MuteIcon /></Slot>
        <Slot $w={38}><BatteryIcon /></Slot>
        <TwoLines $w={90} $align="right" $ls={0.3}>13:54<br />22-12-2023</TwoLines>
        <Slot $w={38}><BellIcon /></Slot>
      </Taskbar>
    </Screen>
  );
}
